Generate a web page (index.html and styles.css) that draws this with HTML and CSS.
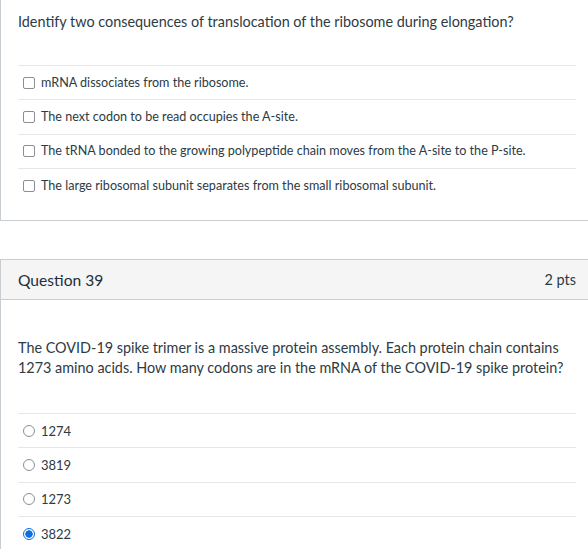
FILE: index.html
```html
<!DOCTYPE html>
<html>
<head>
<meta charset="utf-8">
<link rel="stylesheet" href="styles.css">
</head>
<body>
<div class="card card-first">
  <div class="card-body">
    <p class="qtext qtext-first">Identify two consequences of translocation of the ribosome during elongation?</p>
    <div class="answers">
      <div class="answer"><span class="check"></span><span class="atext small">mRNA dissociates from the ribosome.</span></div>
      <div class="answer"><span class="check"></span><span class="atext small">The next codon to be read occupies the A-site.</span></div>
      <div class="answer"><span class="check"></span><span class="atext small">The tRNA bonded to the growing polypeptide chain moves from the A-site to the P-site.</span></div>
      <div class="answer"><span class="check"></span><span class="atext small">The large ribosomal subunit separates from the small ribosomal subunit.</span></div>
    </div>
  </div>
</div>

<div class="card card-second">
  <div class="header">
    <span class="qname">Question 39</span>
    <span class="pts">2 pts</span>
  </div>
  <div class="card-body body2">
    <p class="qtext qtext-second">The COVID-19 spike trimer is a massive protein assembly. Each protein chain contains 1273 amino acids. How many codons are in the mRNA of the COVID-19 spike protein?</p>
    <div class="answers">
      <div class="answer"><span class="radio"></span><span class="atext">1274</span></div>
      <div class="answer"><span class="radio"></span><span class="atext">3819</span></div>
      <div class="answer"><span class="radio"></span><span class="atext">1273</span></div>
      <div class="answer"><span class="radio radio-on"></span><span class="atext">3822</span></div>
    </div>
  </div>
</div>
</body>
</html>
```

FILE: styles.css
```css
html, body {
  margin: 0;
  padding: 0;
  background: #ffffff;
}
body {
  font-family: Lato, "Open Sans", sans-serif;
  color: #2d3b45;
  overflow: hidden;
}
.card {
  border-left: 1px solid #c7cdd1;
}
.card-first {
  border-bottom: 1px solid #c7cdd1;
}
.card-second {
  margin-top: 38px;
  border-top: 1px solid #c7cdd1;
}
.card-body {
  padding: 12px 12px 18px 17px;
}
.qtext {
  margin: 0;
  font-size: 14.4px;
  line-height: 20px;
}
.qtext-first {
  margin-bottom: 33px;
}
.answers {
  display: flex;
  flex-direction: column;
}
.answer {
  display: flex;
  align-items: center;
  height: 33.3px;
  border-top: 1px solid #e4e6e8;
}
.check {
  width: 10px;
  height: 10px;
  border: 1px solid #8a8f94;
  border-radius: 2px;
  margin-left: 5px;
  margin-right: 6px;
  flex: none;
}
.radio {
  width: 10px;
  height: 10px;
  border: 1px solid #8a8f94;
  border-radius: 50%;
  margin-left: 5px;
  margin-right: 6px;
  flex: none;
}
.radio-on {
  border-color: #0a6fe0;
  background: radial-gradient(circle, #0a6fe0 0 3.4px, #ffffff 4px);
}
.atext {
  font-size: 13px;
  line-height: 16px;
}
.atext.small {
  font-size: 12.6px;
}
.header {
  display: flex;
  justify-content: space-between;
  align-items: center;
  height: 39px;
  background: #f5f5f5;
  border-bottom: 1px solid #c7cdd1;
  padding: 0 12px 0 17px;
}
.qname {
  font-size: 15.6px;
  font-weight: 400;
  color: #22303a;
}
.pts {
  font-size: 14.4px;
  font-weight: 400;
}
.body2 {
  padding-top: 38px;
}
.qtext-second {
  margin-bottom: 35px;
}
```
